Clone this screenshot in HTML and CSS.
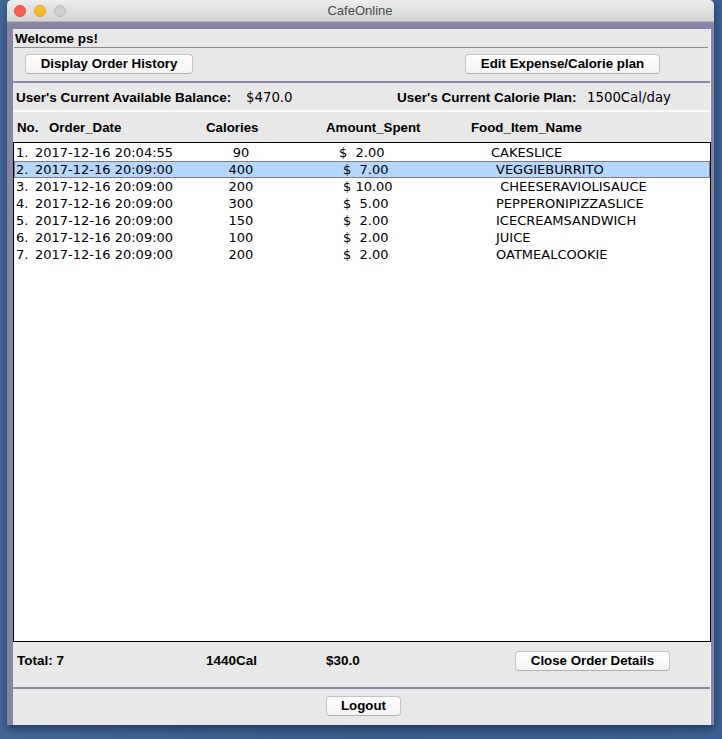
FILE: index.html
```html
<!DOCTYPE html>
<html>
<head>
<meta charset="utf-8">
<title>CafeOnline</title>
<link rel="stylesheet" href="styles.css">
</head>
<body>
<div class="window">
  <div class="titlebar">
    <div class="lights">
      <span class="light red"></span>
      <span class="light yellow"></span>
      <span class="light gray"></span>
    </div>
    <div class="title">CafeOnline</div>
  </div>
  <div class="frame">
    <div class="panel">
      <section class="welcome">
        <div class="welcome-text">Welcome ps!</div>
        <div class="rule"></div>
        <div class="actions">
          <button class="btn btn-history">Display Order History</button>
          <button class="btn btn-edit">Edit Expense/Calorie plan</button>
        </div>
      </section>
      <section class="info">
        <span class="label">User's Current Available Balance:</span>
        <span class="value">$470.0</span>
        <span class="label">User's Current Calorie Plan:</span>
        <span class="value">1500Cal/day</span>
      </section>
      <section class="orders">
        <div class="cols">
          <span>No.</span>
          <span>Order_Date</span>
          <span>Calories</span>
          <span>Amount_Spent</span>
          <span>Food_Item_Name</span>
        </div>
        <div class="list">
          <div class="row row-first"><span>1.</span><span>2017-12-16 20:04:55</span><span class="cal">90</span><span class="amt">$  2.00</span><span class="name">CAKESLICE</span></div>
          <div class="row selected"><span>2.</span><span>2017-12-16 20:09:00</span><span class="cal">400</span><span class="amt">$  7.00</span><span class="name">VEGGIEBURRITO</span></div>
          <div class="row"><span>3.</span><span>2017-12-16 20:09:00</span><span class="cal">200</span><span class="amt">$ 10.00</span><span class="name"> CHEESERAVIOLISAUCE</span></div>
          <div class="row"><span>4.</span><span>2017-12-16 20:09:00</span><span class="cal">300</span><span class="amt">$  5.00</span><span class="name">PEPPERONIPIZZASLICE</span></div>
          <div class="row"><span>5.</span><span>2017-12-16 20:09:00</span><span class="cal">150</span><span class="amt">$  2.00</span><span class="name">ICECREAMSANDWICH</span></div>
          <div class="row"><span>6.</span><span>2017-12-16 20:09:00</span><span class="cal">100</span><span class="amt">$  2.00</span><span class="name">JUICE</span></div>
          <div class="row"><span>7.</span><span>2017-12-16 20:09:00</span><span class="cal">200</span><span class="amt">$  2.00</span><span class="name">OATMEALCOOKIE</span></div>
        </div>
        <div class="totals">
          <span class="tot">Total: 7</span>
          <span class="tot">1440Cal</span>
          <span class="tot">$30.0</span>
          <button class="btn btn-close">Close Order Details</button>
        </div>
      </section>
      <section class="logout-bar">
        <button class="btn btn-logout">Logout</button>
      </section>
    </div>
  </div>
</div>
</body>
</html>
```

FILE: styles.css
```css
html, body {
  margin: 0;
  padding: 0;
}
body {
  width: 722px;
  height: 739px;
  overflow: hidden;
  background: linear-gradient(90deg, #456899 0%, #3a5c8d 50%, #3d6094 100%);
  font-family: "Liberation Sans", Arial, sans-serif;
}
.window {
  margin-left: 7px;
  width: 707px;
  height: 725px;
  border-radius: 5px 5px 0 0;
  overflow: hidden;
  box-shadow: 0 4px 10px rgba(10, 25, 50, 0.55);
  background: #8686a4;
}
.titlebar {
  height: 21px;
  border-bottom: 1px solid #b4b4b4;
  background: linear-gradient(#ececec, #d4d4d4);
  display: flex;
  align-items: center;
  position: relative;
}
.lights {
  display: flex;
  gap: 8px;
  padding-left: 7px;
}
.light {
  width: 12px;
  height: 12px;
  border-radius: 50%;
  box-sizing: border-box;
}
.light.red { background: #fc5f57; border: 1px solid #e0443e; }
.light.yellow { background: #fdbc2e; border: 1px solid #dea123; }
.light.gray { background: #cecece; border: 1px solid #bcbcbc; }
.title {
  flex: 1;
  text-align: center;
  margin-left: -60px;
  font-size: 13px;
  color: #4d4d4d;
}
.frame {
  padding: 7px 3px 0 6px;
  background: #8686a4;
}
.panel {
  width: 698px;
  display: flex;
  flex-direction: column;
  background: #e8e8e8;
  border-right: 1px solid #fafafa;
  box-sizing: border-box;
}
.welcome {
  height: 54px;
  box-sizing: border-box;
  border-bottom: 2px solid #8a8aa8;
  background: #e8e8e8;
}
.welcome-text {
  height: 18px;
  line-height: 20px;
  padding-left: 2px;
  font-weight: bold;
  font-size: 13.5px;
  color: #000;
}
.rule {
  height: 1px;
  margin: 0 2px 0 1px;
  background: #8c8c8c;
}
.actions {
  display: flex;
  justify-content: space-between;
  padding: 6px 50px 0 12px;
}
.btn {
  height: 20px;
  box-sizing: border-box;
  padding: 0;
  border: 1px solid #c4c4c4;
  border-bottom-color: #b0b0b0;
  border-radius: 4px;
  background: linear-gradient(#ffffff, #f4f4f4);
  font-family: "Liberation Sans", Arial, sans-serif;
  font-weight: bold;
  font-size: 13.3px;
  color: #000;
  line-height: 18px;
  text-align: center;
}
.btn-history { width: 168px; }
.btn-edit { width: 195px; }
.info {
  height: 29px;
  box-sizing: border-box;
  border-bottom: 2px solid #fbfbfb;
  display: grid;
  grid-template-columns: 230px 151px 190px 1fr;
  align-items: center;
  padding-left: 3px;
  padding-top: 1px;
}
.info .label {
  font-weight: bold;
  font-size: 13.5px;
}
.info .value {
  font-family: "DejaVu Sans", sans-serif;
  font-size: 13.3px;
}
.cols {
  height: 30px;
  display: grid;
  grid-template-columns: 32px 157px 120px 145px 1fr;
  align-items: center;
  padding-left: 4px;
  font-weight: bold;
  font-size: 13.3px;
}
.list {
  height: 500px;
  box-sizing: border-box;
  border: 1px solid #000;
  background: #fff;
  padding: 1px 0 0 2px;
  margin-right: -1px;
}
.row {
  height: 17px;
  line-height: 17px;
  display: grid;
  grid-template-columns: 19px 166px 80px 62px 153px 1fr;
  font-family: "DejaVu Sans", sans-serif;
  font-size: 13px;
  color: #000;
  white-space: pre;
}
.row .cal {
  text-align: center;
}
.row .amt {
  grid-column: 5;
}
.row .name {
  grid-column: 6;
}
.row-first .amt { margin-left: -4px; }
.row-first .name { margin-left: -5px; }
.row.selected {
  margin-left: -2px;
  padding-left: 2px;
  background: #b5d6fd;
  box-shadow: inset 0 0 0 1px #7c7c8c;
}
.totals {
  height: 47px;
  box-sizing: border-box;
  border-bottom: 2px solid #8a8aa8;
  display: grid;
  grid-template-columns: 189px 120px 189px 155px;
  align-items: start;
  padding: 9px 0 0 4px;
}
.tot {
  font-weight: bold;
  font-size: 13.5px;
  line-height: 20px;
}
.btn-close { width: 155px; }
.logout-bar {
  height: 36px;
  box-sizing: border-box;
  display: flex;
  justify-content: center;
  padding: 7px 0 0 4px;
}
.btn-logout { width: 75px; }
```
